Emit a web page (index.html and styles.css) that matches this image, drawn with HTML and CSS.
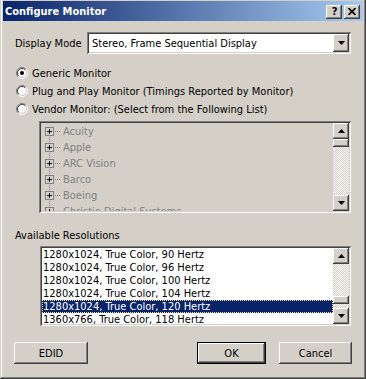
FILE: index.html
```html
<!DOCTYPE html>
<html>
<head>
<meta charset="utf-8">
<link rel="stylesheet" href="styles.css">
</head>
<body>
<div class="window">
  <div class="titlebar">
    <span class="title">Configure Monitor</span>
    <div class="tb-btns">
      <span class="tb-btn raised help">?</span>
      <span class="tb-btn raised">
        <svg width="8" height="7" viewBox="0 0 8 7"><path d="M0.5 0 L7.5 7 M7.5 0 L0.5 7" stroke="#000" stroke-width="1.6" fill="none"/></svg>
      </span>
    </div>
  </div>
  <div class="content">
    <div class="mode-row">
      <span class="mode-label">Display Mode</span>
      <div class="combo sunken">
        <span class="combo-text">Stereo, Frame Sequential Display</span>
        <span class="arrow-btn raised"><svg width="7" height="4" viewBox="0 0 7 4"><path d="M0 0H7L3.5 4Z" fill="#000"/></svg></span>
      </div>
    </div>

    <div class="radios">
      <div class="radio-row">
        <svg class="radio" width="12" height="12" viewBox="0 0 12 12"><circle cx="6" cy="6" r="4.5" fill="#fff"/><path d="M2.11 9.89A5.5 5.5 0 0 1 9.89 2.11" fill="none" stroke="#808080"/><path d="M9.89 2.11A5.5 5.5 0 0 1 2.11 9.89" fill="none" stroke="#fff"/><path d="M2.82 9.18A4.5 4.5 0 0 1 9.18 2.82" fill="none" stroke="#404040"/><path d="M9.18 2.82A4.5 4.5 0 0 1 2.82 9.18" fill="none" stroke="#d4d0c8"/><circle cx="6" cy="6" r="2" fill="#000"/></svg>
        <span>Generic Monitor</span>
      </div>
      <div class="radio-row">
        <svg class="radio" width="12" height="12" viewBox="0 0 12 12"><circle cx="6" cy="6" r="4.5" fill="#fff"/><path d="M2.11 9.89A5.5 5.5 0 0 1 9.89 2.11" fill="none" stroke="#808080"/><path d="M9.89 2.11A5.5 5.5 0 0 1 2.11 9.89" fill="none" stroke="#fff"/><path d="M2.82 9.18A4.5 4.5 0 0 1 9.18 2.82" fill="none" stroke="#404040"/><path d="M9.18 2.82A4.5 4.5 0 0 1 2.82 9.18" fill="none" stroke="#d4d0c8"/></svg>
        <span>Plug and Play Monitor (Timings Reported by Monitor)</span>
      </div>
      <div class="radio-row">
        <svg class="radio" width="12" height="12" viewBox="0 0 12 12"><circle cx="6" cy="6" r="4.5" fill="#fff"/><path d="M2.11 9.89A5.5 5.5 0 0 1 9.89 2.11" fill="none" stroke="#808080"/><path d="M9.89 2.11A5.5 5.5 0 0 1 2.11 9.89" fill="none" stroke="#fff"/><path d="M2.82 9.18A4.5 4.5 0 0 1 9.18 2.82" fill="none" stroke="#404040"/><path d="M9.18 2.82A4.5 4.5 0 0 1 2.82 9.18" fill="none" stroke="#d4d0c8"/></svg>
        <span>Vendor Monitor: (Select from the Following List)</span>
      </div>
    </div>

    <div class="tree sunken">
      <div class="tree-items">
        <div class="tree-row"><span class="expander"></span><span class="connector"></span><span class="tree-text">Acuity</span></div>
        <div class="tree-row"><span class="expander"></span><span class="connector"></span><span class="tree-text">Apple</span></div>
        <div class="tree-row"><span class="expander"></span><span class="connector"></span><span class="tree-text">ARC Vision</span></div>
        <div class="tree-row"><span class="expander"></span><span class="connector"></span><span class="tree-text">Barco</span></div>
        <div class="tree-row"><span class="expander"></span><span class="connector"></span><span class="tree-text">Boeing</span></div>
        <div class="tree-row"><span class="expander"></span><span class="connector"></span><span class="tree-text">Christie Digital Systems</span></div>
      </div>
      <div class="vscroll">
        <span class="arrow-btn raised sq"><svg width="7" height="4" viewBox="0 0 7 4"><path d="M0 4H7L3.5 0Z" fill="#000"/></svg></span>
        <span class="thumb raised"></span>
        <span class="track"></span>
        <span class="arrow-btn raised sq"><svg width="7" height="4" viewBox="0 0 7 4"><path d="M0 0H7L3.5 4Z" fill="#000"/></svg></span>
      </div>
    </div>

    <div class="section-label">Available Resolutions</div>

    <div class="list sunken">
      <div class="list-items">
        <div class="list-row">1280x1024, True Color, 90 Hertz</div>
        <div class="list-row">1280x1024, True Color, 96 Hertz</div>
        <div class="list-row">1280x1024, True Color, 100 Hertz</div>
        <div class="list-row">1280x1024, True Color, 104 Hertz</div>
        <div class="list-row selected">1280x1024, True Color, 120 Hertz</div>
        <div class="list-row">1360x766, True Color, 118 Hertz</div>
      </div>
      <div class="vscroll">
        <span class="arrow-btn raised sq"><svg width="7" height="4" viewBox="0 0 7 4"><path d="M0 4H7L3.5 0Z" fill="#000"/></svg></span>
        <span class="track grow"></span>
        <span class="thumb raised"></span>
        <span class="track small"></span>
        <span class="arrow-btn raised sq"><svg width="7" height="4" viewBox="0 0 7 4"><path d="M0 0H7L3.5 4Z" fill="#000"/></svg></span>
      </div>
    </div>

    <div class="button-row">
      <button class="btn raised edid">EDID</button>
      <span class="spacer"></span>
      <button class="btn default ok">OK</button>
      <button class="btn raised cancel">Cancel</button>
    </div>
  </div>
</div>
</body>
</html>
```

FILE: styles.css
```css
* { box-sizing: border-box; }
html, body { margin: 0; padding: 0; }
body {
  width: 366px;
  height: 379px;
  overflow: hidden;
  background: #d4d0c8;
  font-family: "DejaVu Sans Condensed", "Liberation Sans", sans-serif;
  font-size: 11px;
  color: #000;
}

.raised {
  background: #d4d0c8;
  box-shadow: inset -1px -1px #404040, inset 1px 1px #ffffff, inset -2px -2px #808080, inset 2px 2px #d4d0c8;
}
.sunken {
  box-shadow: inset 1px 1px #808080, inset -1px -1px #ffffff, inset 2px 2px #404040, inset -2px -2px #d4d0c8;
}

.window {
  width: 366px;
  height: 379px;
  padding: 1px 3px 3px 3px;
  background: #d4d0c8;
  box-shadow: inset -1px -1px #404040, inset 1px 0 #d4d0c8, inset -2px -2px #808080, inset 2px 0 #ffffff;
  display: flex;
  flex-direction: column;
}

.titlebar {
  height: 20px;
  flex: none;
  background: linear-gradient(to right, #0a246a, #a6caf0);
  display: flex;
  align-items: center;
  padding: 1px 3px 0 2px;
}
.title {
  flex: 1;
  color: #fff;
  font-weight: bold;
  font-size: 11px;
  white-space: nowrap;
}
.tb-btns { display: flex; gap: 2px; }
.tb-btn {
  width: 16px;
  height: 14px;
  display: flex;
  align-items: center;
  justify-content: center;
  font-weight: bold;
  font-size: 11px;
  line-height: 14px;
}
.tb-btn.help { padding-left: 1px; }

.content {
  flex: 1;
  display: flex;
  flex-direction: column;
  padding: 0 11px;
}

.mode-row {
  display: flex;
  align-items: center;
  margin-top: 11px;
  height: 22px;
}
.mode-label { width: 73px; padding-left: 1px; }
.combo {
  width: 264px;
  height: 22px;
  background: #fff;
  display: flex;
  align-items: center;
  padding: 2px;
}
.combo-text { flex: 1; padding-left: 3px; white-space: nowrap; }
.arrow-btn {
  width: 16px;
  height: 18px;
  display: flex;
  align-items: center;
  justify-content: center;
  flex: none;
}
.arrow-btn.sq { height: 16px; }

.radios {
  margin-top: 10px;
  display: flex;
  flex-direction: column;
}
.radio-row {
  height: 18px;
  display: flex;
  align-items: center;
  gap: 4px;
  padding-left: 2px;
  white-space: nowrap;
}
.radio { flex: none; }

.tree {
  margin-top: 3px;
  margin-left: 25px;
  width: 312px;
  height: 92px;
  padding: 2px;
  display: flex;
  background: #d4d0c8;
}
.tree-items {
  flex: 1;
  overflow: hidden;
  background: repeating-linear-gradient(to bottom, #808080 0 1px, transparent 1px 2px) 8px 8px / 1px 100% no-repeat;
}
.tree-row {
  height: 16px;
  display: flex;
  align-items: center;
  padding-left: 4px;
  white-space: nowrap;
}
.expander {
  width: 9px;
  height: 9px;
  flex: none;
  border: 1px solid #808080;
  background:
    linear-gradient(#000, #000) center / 5px 1px no-repeat,
    linear-gradient(#000, #000) center / 1px 5px no-repeat,
    #d4d0c8;
}
.connector {
  width: 5px;
  height: 1px;
  flex: none;
  background: repeating-linear-gradient(to right, #808080 0 1px, transparent 1px 2px);
  margin: 0 3px 0 1px;
}
.tree-text { color: #808080; }

.vscroll {
  width: 16px;
  flex: none;
  display: flex;
  flex-direction: column;
}
.track {
  flex: 1;
  background: repeating-conic-gradient(#ffffff 0 25%, #d4d0c8 0 50%) 0 0 / 2px 2px;
}
.track.small { flex: none; height: 4px; }
.thumb { height: 8px; flex: none; }

.section-label {
  margin-top: 16px;
  height: 13px;
  line-height: 13px;
  padding-left: 1px;
}

.list {
  margin-top: 4px;
  margin-left: 26px;
  width: 311px;
  height: 80px;
  padding: 2px;
  background: #fff;
  display: flex;
}
.list-items { flex: 1; overflow: hidden; }
.list-row {
  height: 13px;
  line-height: 13px;
  padding-left: 1px;
  white-space: nowrap;
}
.list-row.selected {
  background: #0a246a;
  color: #fff;
  outline: 1px dotted #f5db95;
  outline-offset: -1px;
}

.button-row {
  margin-top: 16px;
  display: flex;
  height: 22px;
}
.spacer { flex: 1; }
.btn {
  font: inherit;
  color: #000;
  border: 0;
  padding: 0;
  height: 22px;
}
.edid { width: 74px; }
.ok {
  width: 69px;
  margin-right: 13px;
  background: #d4d0c8;
  box-shadow: inset 0 0 0 1px #000, inset -2px -2px #404040, inset 2px 2px #ffffff, inset -3px -3px #808080;
}
.cancel { width: 73px; margin-right: 0; }
```
